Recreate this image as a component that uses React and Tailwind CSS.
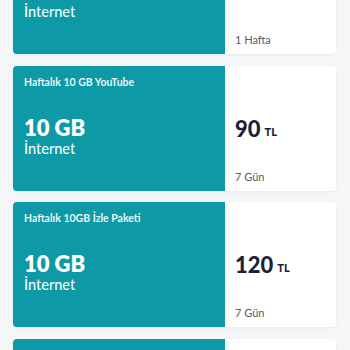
import React from "react";

const cards = [
  { title: "Haftalık 10 GB Paket", amount: "10 GB", price: "60", period: "1 Hafta" },
  { title: "Haftalık 10 GB YouTube", amount: "10 GB", price: "90", period: "7 Gün" },
  { title: "Haftalık 10GB İzle Paketi", amount: "10 GB", price: "120", period: "7 Gün" },
  { title: "Haftalık 20 GB Paket", amount: "20 GB", price: "150", period: "7 Gün" },
];

function Card({ c }) {
  return (
    <div className="flex h-[125px] shrink-0 rounded-[4px] shadow-[0_1px_3px_rgba(0,0,0,0.06)]">
      <div className="flex w-[212px] flex-col rounded-l-[4px] bg-[#0d9aa6] px-[11px] pt-[9px] text-white">
        <div className="text-[10.5px] font-bold leading-[14px] text-[#e8f7f8]">{c.title}</div>
        <div className="mt-[28px] text-[22px] font-extrabold leading-[22px]">{c.amount}</div>
        <div className="mt-[1px] text-[14.5px] font-medium leading-[17px] text-[#f2fbfc]">İnternet</div>
      </div>
      <div className="flex w-[111px] flex-col rounded-r-[4px] bg-white pl-[10px]">
        <div className="flex flex-1 items-center pt-[22px]">
          <span className="text-[22px] font-black leading-none text-[#1d1f3b]">{c.price}</span>
          <span className="ml-[4px] mt-[5px] text-[11px] font-black leading-none text-[#1d1f3b]">TL</span>
        </div>
        <div className="pb-[7px] text-[11px] leading-[14px] text-[#555a64]">{c.period}</div>
      </div>
    </div>
  );
}

export default function App() {
  return (
    <div
      className="h-[350px] w-[350px] overflow-hidden bg-[#f5f6f8]"
      style={{ fontFamily: "Lato, 'Noto Sans', sans-serif" }}
    >
      <div className="ml-[13px] mt-[-71px] flex w-[323px] flex-col gap-[11.5px]">
        {cards.map((c, i) => (
          <Card key={i} c={c} />
        ))}
      </div>
    </div>
  );
}
